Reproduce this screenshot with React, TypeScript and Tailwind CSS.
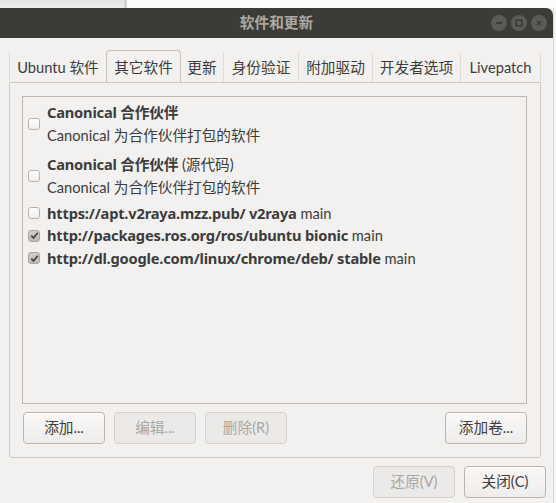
const tabs = [
  { label: "Ubuntu 软件", w: "w-[97px]" },
  { label: "其它软件", w: "w-[75px]", active: true },
  { label: "更新", w: "w-[43px]" },
  { label: "身份验证", w: "w-[75px]" },
  { label: "附加驱动", w: "w-[74px]" },
  { label: "开发者选项", w: "w-[88px]" },
  { label: "Livepatch", w: "w-[80px]" },
];

const sources = [
  { url: "https://apt.v2raya.mzz.pub/ v2raya", comp: "main", on: false },
  { url: "http://packages.ros.org/ros/ubuntu bionic", comp: "main", on: true },
  { url: "http://dl.google.com/linux/chrome/deb/ stable", comp: "main", on: true },
];

// bold runs use a wider face than the body text
const strong = "font-bold tracking-[-0.2px] font-[family-name:'Noto_Sans','Noto_Sans_CJK_SC',sans-serif]";

function Check({ on }: { on: boolean }) {
  if (on) {
    return (
      <span className="flex justify-center items-center w-[12px] h-[12px] rounded-[3px] border border-[#a9a59e] bg-gradient-to-b from-[#d2cfca] to-[#bdbab4] shrink-0">
        <svg width="9" height="9" viewBox="0 0 9 9">
          <path d="M1.3 4.6 L3.6 6.9 L7.8 1.8" fill="none" stroke="#454542" strokeWidth="1.7" />
        </svg>
      </span>
    );
  }
  return (
    <span className="w-[12px] h-[12px] rounded-[3px] border border-[#b7b3ac] bg-gradient-to-b from-[#ffffff] to-[#efeeec] shrink-0" />
  );
}

function Btn({ label, disabled }: { label: string; disabled?: boolean }) {
  return (
    <button
      type="button"
      disabled={disabled}
      className={
        disabled
          ? "flex justify-center items-center w-[82px] h-[32px] rounded-[4px] border border-[#d4d1cc] bg-[#ebeae8] text-[#a9a6a1] text-[14.67px]"
          : "flex justify-center items-center w-[82px] h-[32px] rounded-[4px] border border-[#b9b5ae] bg-gradient-to-b from-[#f9f8f7] to-[#eeedeb] text-[#3c3c3c] text-[14.67px] shadow-[inset_0_1px_0_#ffffff]"
      }
    >
      {label}
    </button>
  );
}

function WinButton({ kind }: { kind: "min" | "max" | "close" }) {
  return (
    <span className="flex justify-center items-center w-[16px] h-[16px] rounded-full bg-[#5b5a56]">
      <svg width="10" height="10" viewBox="0 0 10 10">
        {kind === "min" && <path d="M2 5 H8" stroke="#34332f" strokeWidth="1.5" />}
        {kind === "max" && <rect x="2.2" y="2.2" width="5.6" height="5.6" fill="none" stroke="#34332f" strokeWidth="1.3" />}
        {kind === "close" && <path d="M3 3 L7 7 M7 3 L3 7" stroke="#3c3b37" strokeWidth="1.3" />}
      </svg>
    </span>
  );
}

export default function App() {
  return (
    <div className="flex flex-col w-[556px] h-[503px] overflow-hidden bg-white font-[family-name:Lato,'Noto_Sans_CJK_SC',sans-serif]">
      {/* desktop behind the window */}
      <div className="flex h-[8px] shrink-0">
        <div className="w-[124px] bg-gradient-to-b from-[#e4e3e1] to-[#efeeec]" />
        <div className="w-[3px] bg-[#d3d2d0]" />
        <div className="flex-1 bg-[#fbfbfb]" />
      </div>

      <div className="flex flex-1 min-h-0">
        <div className="flex flex-col w-[553px] bg-[#f2f1f0]">
          {/* title bar */}
          <div className="grid grid-cols-[1fr_auto_1fr] items-center h-[30px] rounded-tr-[7px] bg-[#3c3b37] shrink-0">
            <div />
            <div className="text-[14.67px] font-bold text-[#aba9a3] leading-none">软件和更新</div>
            <div className="flex gap-[4px] justify-end pr-[6px]">
              <WinButton kind="min" />
              <WinButton kind="max" />
              <WinButton kind="close" />
            </div>
          </div>

          <div className="pt-[12px] pl-[9px] pr-[12px]">
            {/* notebook tabs */}
            <div className="flex items-end h-[32px]">
              {tabs.map((t, i) => {
                const beforeActive = tabs[i + 1]?.active;
                return (
                  <div
                    key={t.label}
                    className={
                      t.active
                        ? `${t.w} flex justify-center items-center h-[32px] pt-[2px] rounded-t-[4px] border border-b-0 border-[#c6c2bb] text-[#3c3c3c] text-[14.67px]`
                        : `${t.w} flex justify-center items-center h-[30px] pt-[2px] text-[#3c3c3c] text-[14.67px] ${i === 0 ? "border-l border-[#e0ddd8]" : ""} ${beforeActive ? "" : "border-r border-r-[#e0ddd8]"}`
                    }
                  >
                    {t.label}
                  </div>
                );
              })}
            </div>

            {/* notebook page */}
            <div className="flex flex-col h-[376px] pt-[13px] pb-[13px] pl-[12px] pr-[13px] rounded-b-[3px] border border-[#cdc9c3]">
              <div className="flex flex-col flex-1 border border-[#bcb8b1] text-[14.67px] text-[#3c3c3c]">
                <div className="flex gap-[7px] items-center mt-[4px] pl-[5px]">
                  <Check on={false} />
                  <div className="leading-[23px]">
                    <div className={strong}>Canonical 合作伙伴</div>
                    <div>Canonical 为合作伙伴打包的软件</div>
                  </div>
                </div>
                <div className="flex gap-[7px] items-center mt-[6px] pl-[5px]">
                  <Check on={false} />
                  <div className="leading-[23px]">
                    <div>
                      <span className={strong}>Canonical 合作伙伴</span> (源代码)
                    </div>
                    <div>Canonical 为合作伙伴打包的软件</div>
                  </div>
                </div>
                <div className="mt-[3px]">
                  {sources.map((s) => (
                    <div key={s.url} className="flex gap-[7px] items-center h-[22.5px] pl-[5px]">
                      <Check on={s.on} />
                      <div>
                        <span className={strong}>{s.url}</span> {s.comp}
                      </div>
                    </div>
                  ))}
                </div>
              </div>

              <div className="flex justify-between items-center mt-[8px] pl-px">
                <div className="flex gap-[9px]">
                  <Btn label="添加..." />
                  <Btn label="编辑..." disabled />
                  <Btn label="删除(R)" disabled />
                </div>
                <Btn label="添加卷..." />
              </div>
            </div>
          </div>

          <div className="flex gap-[9px] justify-end mt-[8px] pr-[7px]">
            <Btn label="还原(V)" disabled />
            <Btn label="关闭(C)" />
          </div>
        </div>
        <div className="flex-1 border-l border-[#dcdcdc] bg-[#f4f4f4]" />
      </div>
    </div>
  );
}
